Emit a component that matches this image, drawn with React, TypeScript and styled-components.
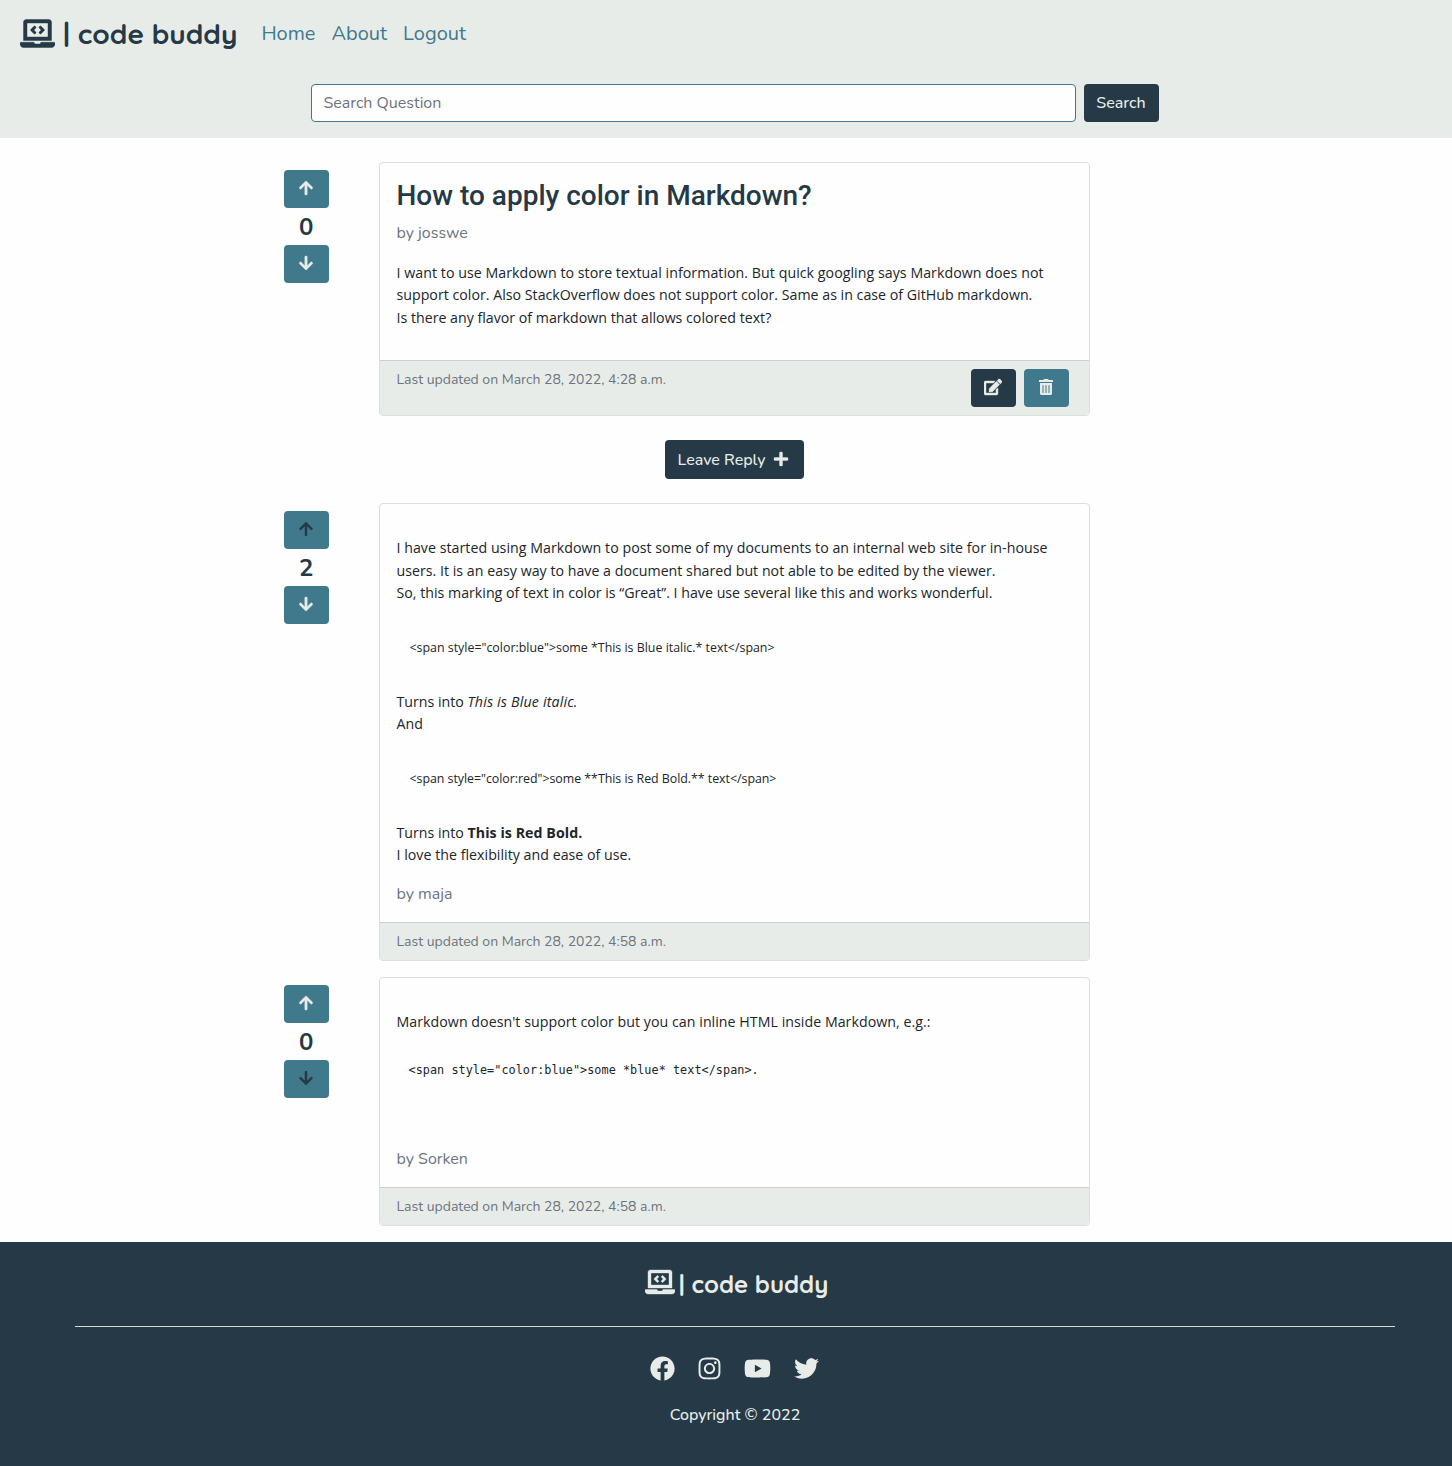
import React from "react";
import styled, { createGlobalStyle } from "styled-components";
import {
  FaArrowDown, FaArrowUp, FaEdit, FaFacebook, FaInstagram, FaLaptopCode,
  FaPlus, FaTrashAlt, FaTwitter, FaYoutube,
} from "react-icons/fa";

const navy = "#253946";
const teal = "#40798c";
const mist = "#e8ece9";
const paper = "#fefefe";
const nunito = `Nunito, Lato, "Open Sans", sans-serif`;
const segoe = `"Segoe UI", "Open Sans", "Noto Sans", sans-serif`;

const GlobalStyle = createGlobalStyle`
  *, *::before, *::after { box-sizing: border-box; }
  body { margin: 0; background: ${paper}; font-family: ${nunito}; font-size: 16px; line-height: 1.5; color: #212529; overflow-x: hidden; }
  svg { display: block; flex: none; }
`;

const Track = styled.span<{ $ls: number }>`
  display: inline-block;
  white-space: pre;
  letter-spacing: ${(p) => p.$ls}px;
`;

const Header = styled.header`
  height: 138px;
  background: ${mist};
`;
const Nav = styled.nav`
  display: flex;
  align-items: center;
  height: 68px;
  padding-left: 20px;
`;
const Brand = styled.a<{ $size: number; $color: string; $gap: number; $lift: number }>`
  display: flex;
  align-items: center;
  gap: ${(p) => p.$gap}px;
  height: 36px;
  font-family: Quicksand, Lato, sans-serif;
  font-weight: 700;
  font-size: ${(p) => p.$size}px;
  color: ${(p) => p.$color};
  svg { margin-bottom: ${(p) => p.$lift}px; stroke: currentColor; stroke-width: 8px; }
`;
const NavLinks = styled.div`
  display: flex;
  gap: 16px;
  margin-left: 24px;
  font-size: 20px;
  line-height: 30px;
  color: ${teal};
`;
const SearchForm = styled.form`
  display: flex;
  gap: 8px;
  padding: 16px 0 0 311px;
`;
const SearchInput = styled.div`
  width: 765px;
  height: 38px;
  padding: 6px 11.5px;
  border: 1px solid ${teal};
  border-radius: 4px;
  background: ${paper};
  line-height: 24px;
  color: #6c757d;
`;
const Button = styled.button<{ $bg: string; $fg?: string; $w: number; $h?: number; $bold?: number }>`
  display: flex;
  align-items: center;
  justify-content: center;
  gap: 7px;
  width: ${(p) => p.$w}px;
  height: ${(p) => p.$h ?? 38}px;
  padding: 0 1px 0 0;
  border: 0;
  border-radius: 4px;
  background: ${(p) => p.$bg};
  color: ${(p) => p.$fg ?? mist};
  font: 500 16px/24px ${nunito};
  svg { margin-bottom: 2px; stroke: currentColor; stroke-width: ${(p) => p.$bold ?? 0}px; }
`;
const ReplyButton = styled(Button)`
  gap: 8px;
  padding-right: 2px;
`;
const Main = styled.main`
  height: 1104px;
  padding: 24px 0 0 284px;
`;
const Post = styled.section<{ $h: number; $mb: number }>`
  display: flex;
  height: ${(p) => p.$h}px;
  margin-bottom: ${(p) => p.$mb}px;
`;
const Votes = styled.div`
  display: flex;
  flex-direction: column;
  align-items: center;
  width: 45px;
  margin-right: 50px;
  padding-top: 8px;
`;
const Score = styled.div`
  height: 37px;
  padding-right: 0.5px;
  font: 700 24px/38px ${nunito};
  color: ${navy};
`;
const Card = styled.article`
  display: flex;
  flex-direction: column;
  width: 711px;
  border: 1px solid #dcdfde;
  border-radius: 4px;
  overflow: hidden;
`;
const Body = styled.div`
  flex: 1;
  padding: 16px 16px 0 16.5px;
`;
const CardFooter = styled.footer<{ $h: number }>`
  display: flex;
  justify-content: space-between;
  height: ${(p) => p.$h}px;
  padding: 8px 20px 0 16.5px;
  border-top: 1px solid #cccfce;
  background: ${mist};
  font-size: 14px;
  line-height: 21px;
  color: #6c757d;
`;
const Actions = styled.div`
  display: flex;
  gap: 8px;
`;
const Title = styled.h3`
  margin: 0 0 8px;
  font: 500 28px/33.6px Roboto, sans-serif;
  color: ${navy};
`;
const Author = styled.div<{ $mt?: number }>`
  margin-top: ${(p) => p.$mt ?? 0}px;
  line-height: 24px;
  color: #6c757d;
`;
const Text = styled.div<{ $mt?: number; $ls?: number }>`
  margin-top: ${(p) => p.$mt ?? 0}px;
  font: 400 14.2px/22.5px ${segoe};
  letter-spacing: ${(p) => p.$ls ?? 0}px;
  white-space: pre;
`;
const Code = styled.div<{ $mono?: boolean; $mt: number; $ls: number }>`
  margin-top: ${(p) => p.$mt}px;
  padding-left: ${(p) => (p.$mono ? 12 : 13)}px;
  font: ${(p) => (p.$mono ? `11.8px/20px Consolas, "DejaVu Sans Mono", monospace` : `12.4px/20px ${segoe}`)};
  letter-spacing: ${(p) => p.$ls}px;
`;
const ReplyRow = styled.div`
  display: flex;
  padding-left: 381px;
  margin-bottom: 24px;
`;
const PageFooter = styled.footer`
  display: flex;
  flex-direction: column;
  align-items: center;
  width: 1470px;
  height: 224px;
  padding-top: 24px;
  background: ${navy};
  color: ${mist};
`;
const FooterBrand = styled(Brand)`
  padding-left: 3px;
`;
const Rule = styled.div`
  width: 1320px;
  height: 1px;
  margin: 24px 0 28px;
  background: #d5dad8;
`;
const Social = styled.div`
  display: flex;
  align-items: center;
  height: 26px;
  gap: 22px;
  padding-right: 1px;
  svg:last-child { margin-left: 1px; }
`;
const Copyright = styled.div`
  margin-top: 22px;
  font-weight: 500;
  line-height: 24px;
`;

const VoteBox = ({ score, up, down }: { score: number; up?: boolean; down?: boolean }) => (
  <Votes>
    <Button $bg={teal} $fg={up ? navy : mist} $w={45} $bold={up ? 0 : 10}><FaArrowUp size={16} /></Button>
    <Score>{score}</Score>
    <Button $bg={teal} $fg={down ? navy : mist} $w={45} $bold={down ? 0 : 10}><FaArrowDown size={16} /></Button>
  </Votes>
);

export default function App() {
  return (
    <>
      <GlobalStyle />
      <Header>
        <Nav>
          <Brand $size={28} $color={navy} $gap={8} $lift={1}>
            <FaLaptopCode size={35} />
            <span>| code buddy</span>
          </Brand>
          <NavLinks>
            <span>Home</span>
            <span>About</span>
            <span>Logout</span>
          </NavLinks>
        </Nav>
        <SearchForm>
          <SearchInput>Search Question</SearchInput>
          <Button $bg={navy} $w={75}>Search</Button>
        </SearchForm>
      </Header>
      <Main>
        <Post $h={254} $mb={24}>
          <VoteBox score={0} />
          <Card>
            <Body>
              <Title>How to apply color in Markdown?</Title>
              <Author>by josswe</Author>
              <Text $mt={17} $ls={0.045}>I want to use Markdown to store textual information. But quick googling says Markdown does not</Text>
              <Text $ls={0.01}>support color. Also StackOverflow does not support color. Same as in case of GitHub markdown.</Text>
              <Text>Is there any flavor of markdown that allows colored text?</Text>
            </Body>
            <CardFooter $h={55}>
              <span>Last updated on March 28, 2022, 4:28 a.m.</span>
              <Actions>
                <Button $bg={navy} $w={45} $bold={14}><FaEdit size={18} /></Button>
                <Button $bg={teal} $w={45}><FaTrashAlt size={16} /></Button>
              </Actions>
            </CardFooter>
          </Card>
        </Post>
        <ReplyRow>
          <ReplyButton $bg={navy} $w={139} $h={39} $bold={12}>Leave Reply<FaPlus size={16} /></ReplyButton>
        </ReplyRow>
        <Post $h={458} $mb={16}>
          <VoteBox score={2} up />
          <Card>
            <Body>
              <Text $mt={17} $ls={0.035}>I have started using Markdown to post some of my documents to an internal web site for in-house</Text>
              <Text $ls={0.016}>users. It is an easy way to have a document shared but not able to be edited by the viewer.</Text>
              <Text $ls={0.006}>So, this marking of text in color is “Great”. I have use several like this and works wonderful.</Text>
              <Code $mt={33} $ls={0}>{'<span style="color:blue">some *This is Blue italic.* text</span>'}</Code>
              <Text $mt={33}>Turns into <Track as="em" $ls={0.18}>This is Blue italic.</Track></Text>
              <Text $ls={0.1}>And</Text>
              <Code $mt={33} $ls={-0.035}>{'<span style="color:red">some **This is Red Bold.** text</span>'}</Code>
              <Text $mt={33}>Turns into <Track as="strong" $ls={0.06}>This is Red Bold.</Track></Text>
              <Text $ls={0.025}>I love the flexibility and ease of use.</Text>
              <Author $mt={15}>by maja</Author>
            </Body>
            <CardFooter $h={38}>Last updated on March 28, 2022, 4:58 a.m.</CardFooter>
          </Card>
        </Post>
        <Post $h={249} $mb={0}>
          <VoteBox score={0} down />
          <Card>
            <Body>
              <Text $mt={17} $ls={0.04}>Markdown doesn't support color but you can inline HTML inside Markdown, e.g.:</Text>
              <Code $mono $mt={26} $ls={0.045}>{'<span style="color:blue">some *blue* text</span>.'}</Code>
              <Author $mt={67}>by Sorken</Author>
            </Body>
            <CardFooter $h={38}>Last updated on March 28, 2022, 4:58 a.m.</CardFooter>
          </Card>
        </Post>
      </Main>
      <PageFooter>
        <FooterBrand $size={24} $color={mist} $gap={4} $lift={5}>
          <FaLaptopCode size={30} />
          <span>| code buddy</span>
        </FooterBrand>
        <Rule />
        <Social>
          <FaFacebook size={25} /><FaInstagram size={25} /><FaYoutube size={27} /><FaTwitter size={25} />
        </Social>
        <Copyright>Copyright © 2022</Copyright>
      </PageFooter>
    </>
  );
}
